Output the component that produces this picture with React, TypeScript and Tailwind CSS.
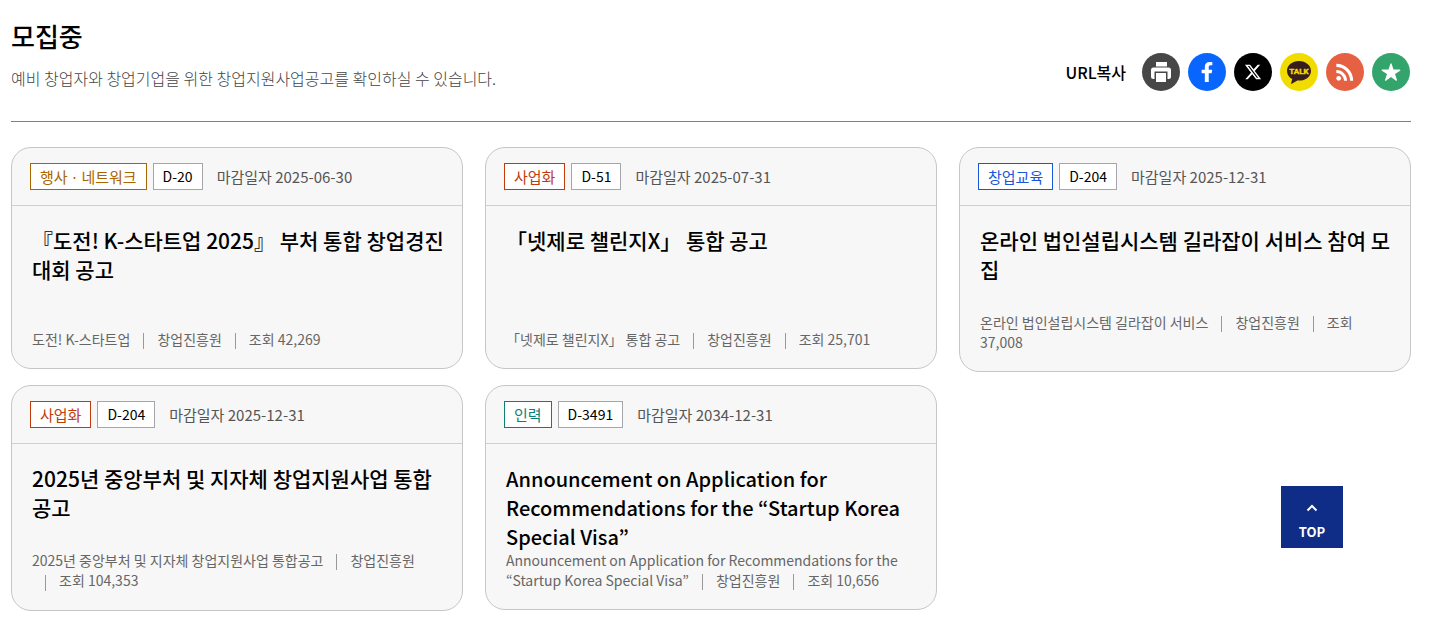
import { FaFacebookF } from 'react-icons/fa';
import { FaXTwitter } from 'react-icons/fa6';
import { IoStar } from 'react-icons/io5';
import { MdRssFeed } from 'react-icons/md';

type Notice = {
  id: number;
  category: string;
  categoryClass: string;
  dday: string;
  deadline: string;
  title: string;
  titleClass?: string;
  program: string;
  agency: string;
  views: string;
};

const notices: Notice[] = [
  {
    id: 1,
    category: '행사ㆍ네트워크',
    categoryClass: 'border-[#a86500] text-[#a86500]',
    dday: 'D-20',
    deadline: '2025-06-30',
    title: '『도전! K-스타트업 2025』 부처 통합 창업경진대회 공고',
    program: '도전! K-스타트업',
    agency: '창업진흥원',
    views: '42,269',
  },
  {
    id: 2,
    category: '사업화',
    categoryClass: 'border-[#c23a0a] text-[#c23a0a]',
    dday: 'D-51',
    deadline: '2025-07-31',
    title: '「넷제로 챌린지X」 통합 공고',
    program: '「넷제로 챌린지X」 통합 공고',
    agency: '창업진흥원',
    views: '25,701',
  },
  {
    id: 3,
    category: '창업교육',
    categoryClass: 'border-[#1a56db] text-[#1a56db]',
    dday: 'D-204',
    deadline: '2025-12-31',
    title: '온라인 법인설립시스템 길라잡이 서비스 참여 모집',
    program: '온라인 법인설립시스템 길라잡이 서비스',
    agency: '창업진흥원',
    views: '37,008',
  },
  {
    id: 4,
    category: '사업화',
    categoryClass: 'border-[#c23a0a] text-[#c23a0a]',
    dday: 'D-204',
    deadline: '2025-12-31',
    title: '2025년 중앙부처 및 지자체 창업지원사업 통합공고',
    program: '2025년 중앙부처 및 지자체 창업지원사업 통합공고',
    agency: '창업진흥원',
    views: '104,353',
  },
  {
    id: 5,
    category: '인력',
    categoryClass: 'border-[#0b7f78] text-[#0b7f78]',
    dday: 'D-3491',
    deadline: '2034-12-31',
    title: 'Announcement on Application for Recommendations for the “Startup Korea Special Visa”',
    titleClass: 'text-[20px]',
    program: 'Announcement on Application for Recommendations for the “Startup Korea Special Visa”',
    agency: '창업진흥원',
    views: '10,656',
  },
];

const PrintIcon = () => (
  <svg viewBox="0 0 38 38" className="size-[38px]" aria-hidden="true">
    <rect x="14" y="9" width="11" height="4.5" fill="#fff" />
    <rect x="9" y="14.5" width="20" height="11.5" rx="2.5" fill="#fff" />
    <rect x="12.5" y="18.5" width="13" height="11" fill="#474747" />
    <rect x="14" y="20" width="10" height="9" fill="#fff" />
  </svg>
);

const TalkIcon = () => (
  <svg viewBox="0 0 38 38" className="size-[38px]" aria-hidden="true">
    <path
      d="M19 8c-6.700 0-12 4.300-12 9.900 0 3.500 2.100 6.500 5.300 8.200l-1.200 4.200c-.1.500.3.700.7.500l5.600-3.300c.5.100 1.100.1 1.600.1 6.700 0 12-4.200 12-9.700S25.700 8 19 8z"
      fill="#371d1e"
    />
    <text
      x="19"
      y="21"
      textAnchor="middle"
      fontSize="8"
      fontWeight="700"
      fill="#f1dc00"
      stroke="#f1dc00"
      strokeWidth="0.400"
      fontFamily="Roboto, sans-serif"
    >
      TALK
    </text>
  </svg>
);

const shareButtons = [
  { label: '인쇄', className: 'bg-[#474747]', icon: <PrintIcon /> },
  { label: '페이스북', className: 'bg-[#0866ff]', icon: <FaFacebookF className="size-5" /> },
  { label: 'X', className: 'bg-black', icon: <FaXTwitter className="size-[18px]" /> },
  { label: '카카오톡', className: 'bg-[#f1dc00]', icon: <TalkIcon /> },
  { label: 'RSS', className: 'bg-[#e66042]', icon: <MdRssFeed className="size-[26px]" /> },
  { label: '즐겨찾기', className: 'bg-[#33a46b]', icon: <IoStar className="size-5" /> },
];

const Divider = () => (
  <span className="mx-[13px] inline-block h-4 w-px bg-[#999] align-middle" />
);

const NoticeCard = ({ notice }: { notice: Notice }) => (
  <li className="rounded-[20px] border border-[#c6c6c6] bg-[#f7f7f7]">
    <div className="flex items-center border-b border-[#d0d0d0] px-[18px] py-[15px] text-[15px] leading-[25px]">
      <span className={`border bg-white px-[9px] ${notice.categoryClass}`}>{notice.category}</span>
      <span className="ml-1.5 border border-[#a5a5ab] bg-white px-[9px] text-[14px] text-black">
        {notice.dday}
      </span>
      <span className="ml-3.5 text-[#555]">마감일자 {notice.deadline}</span>
    </div>
    <div className="pt-5 pb-[19px] pl-5">
      <h3
        className={`min-h-[87px] pr-4 leading-[29px] font-medium text-black ${notice.titleClass ?? 'text-[21px]'}`}
      >
        <a href="#notice">{notice.title}</a>
      </h3>
      <div className="-mt-px flex min-h-[37px] items-end pr-6 text-[14px] leading-5 text-[#666]">
        <p>
          {notice.program}
          <Divider />
          {notice.agency}
          <Divider />
          조회 {notice.views}
        </p>
      </div>
    </div>
  </li>
);

const App = () => {
  return (
    <div className="bg-white pt-4 pr-9 pb-5 pl-[11px] font-['Noto_Sans_CJK_KR',sans-serif]">
      <header className="flex items-end justify-between border-b border-[#808080] pb-[30px]">
        <div>
          <h2 className="text-[26px] leading-10 font-medium text-black">모집중</h2>
          <p className="mt-2.5 mb-px text-[16px] leading-6 font-light text-[#444]">
            예비 창업자와 창업기업을 위한 창업지원사업공고를 확인하실 수 있습니다.
          </p>
        </div>
        <div className="flex items-center gap-2 pr-px">
          <button type="button" className="mr-2 text-[16px] font-medium text-black">
            URL복사
          </button>
          {shareButtons.map((item) => (
            <button
              key={item.label}
              type="button"
              aria-label={item.label}
              className={`flex size-[38px] items-center justify-center rounded-full text-white ${item.className}`}
            >
              {item.icon}
            </button>
          ))}
        </div>
      </header>

      <ul className="mt-[25px] grid grid-cols-3 items-start gap-x-[22px] gap-y-[13px]">
        {notices.map((notice) => (
          <NoticeCard key={notice.id} notice={notice} />
        ))}
      </ul>

      <a
        href="#top"
        className="fixed right-[104px] bottom-[83px] flex size-[62px] flex-col items-center justify-end bg-[#0f2d87] pb-1.5 text-white"
      >
        <svg viewBox="0 0 12 8" className="mb-2.5 h-2 w-3" fill="none" aria-hidden="true">
          <path d="M1.500 6.500 6 2l4.500 4.500" stroke="currentColor" strokeWidth="2" />
        </svg>
        <span className="text-[13px] leading-5 font-bold">TOP</span>
      </a>
    </div>
  );
};

export default App;
